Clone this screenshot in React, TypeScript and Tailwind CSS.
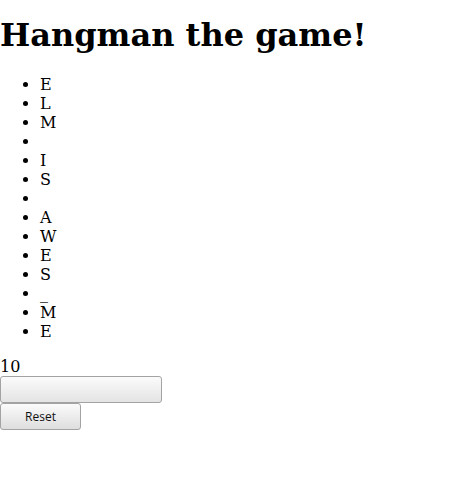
import { useState } from "react";

const letters = ["E", "L", "M", " ", "I", "S", " ", "A", "W", "E", "S", "_", "M", "E"];

export default function App() {
  const [guess, setGuess] = useState("");

  return (
    <div className="font-['DejaVu_Serif',serif] text-[16px] leading-[normal] text-black bg-white min-h-screen">
      <h1 className="text-[32px] font-bold mt-[15.5px] mb-[21.44px] leading-[normal]">Hangman the game!</h1>
      <ul className="list-disc pl-10 my-4">
        {letters.map((l, i) => (
          <li key={i}>{l === " " ? "\u00a0" : l}</li>
        ))}
      </ul>
      <div>10</div>
      <div className="flex">
        <input
          value={guess}
          onChange={(e) => setGuess(e.target.value)}
          className="w-[162px] h-[27px] border border-[#a3a3a3] rounded-[3px] bg-gradient-to-b from-[#fbfbfb] to-[#e4e4e4] px-1 text-[13px] font-['Open_Sans',sans-serif]"
        />
      </div>
      <div className="flex">
        <button className="w-[81px] h-[27px] border border-[#a3a3a3] rounded-[3px] bg-gradient-to-b from-[#fbfbfb] to-[#dedede] text-[12px] font-['Open_Sans',sans-serif] text-[#111]">
          Reset
        </button>
      </div>
    </div>
  );
}
